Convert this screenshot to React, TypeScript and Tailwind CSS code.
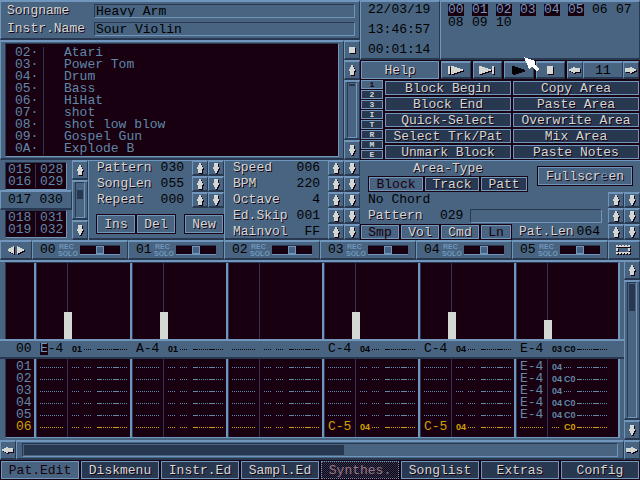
import { ReactNode } from "react";

const raised =
    "border-t-2 border-l border-b-2 border-r border-t-[#7096be] border-l-[#7096be] border-b-[#283850] border-r-[#283850]";
const sunken =
    "border-t border-l border-b border-r border-t-[#283850] border-l-[#283850] border-b-[#7096be] border-r-[#7096be]";
const embossed = "text-[#d4d8d4] [text-shadow:1px_1px_0_#180010]";
// bevel drawn under the children, so steppers can cover it
const ridge = "shadow-[inset_0_1px_0_#7096be,inset_0_-2px_0_#283850]";
const narrow = "font-['Liberation_Sans_Narrow','Liberation_Sans',sans-serif] font-bold";

const samples = [
    { id: "02", name: "Atari" },
    { id: "03", name: "Power Tom" },
    { id: "04", name: "Drum" },
    { id: "05", name: "Bass" },
    { id: "06", name: "HiHat" },
    { id: "07", name: "shot" },
    { id: "08", name: "shot low blow" },
    { id: "09", name: "Gospel Gun" },
    { id: "0A", name: "Explode B" },
];

const slots = ["00", "01", "02", "03", "04", "05", "06", "07", "08", "09", "10"];

const blockActions = [
    ["Block Begin", "Copy Area"],
    ["Block End", "Paste Area"],
    ["Quick-Select", "Overwrite Area"],
    ["Select Trk/Pat", "Mix Area"],
    ["Unmark Block", "Paste Notes"],
];

const songSettings = [
    { label: "Pattern", value: "030" },
    { label: "SongLen", value: "055" },
    { label: "Repeat", value: "000" },
];

const playSettings = [
    { label: "Speed", value: "006" },
    { label: "BPM", value: "220" },
    { label: "Octave", value: "4" },
    { label: "Ed.Skip", value: "001" },
    { label: "Mainvol", value: "FF" },
];

const channels = ["00", "01", "02", "03", "04", "05"];
const levels = [27, 27, 0, 27, 27, 19];

interface Step {
    note?: string;
    ins?: string;
    cmd?: string;
}

const currentRow: Step[] = [
    { note: "E-4", ins: "01" },
    { note: "A-4", ins: "01" },
    {},
    { note: "C-4", ins: "04" },
    { note: "C-4", ins: "04" },
    { note: "E-4", ins: "03", cmd: "C0" },
];

const rows: { id: string; steps: Step[] }[] = [
    { id: "01", steps: [{}, {}, {}, {}, {}, { note: "E-4", ins: "04" }] },
    { id: "02", steps: [{}, {}, {}, {}, {}, { note: "E-4", ins: "04", cmd: "C0" }] },
    { id: "03", steps: [{}, {}, {}, {}, {}, { note: "E-4", ins: "04" }] },
    { id: "04", steps: [{}, {}, {}, {}, {}, { note: "E-4", ins: "04", cmd: "C0" }] },
    { id: "05", steps: [{}, {}, {}, {}, {}, { note: "E-4", ins: "04", cmd: "C0" }] },
    {
        id: "06",
        steps: [{}, {}, {}, { note: "C-5", ins: "04" }, { note: "C-5", ins: "04" }, { cmd: "C0" }],
    },
];

const tabs = ["Pat.Edit", "Diskmenu", "Instr.Ed", "Sampl.Ed", "Synthes.", "Songlist", "Extras", "Config"];

const glyphs = {
    up: { w: 6, h: 10, d: "M2 0h2v2h1v2h1v2h-1v4h-4v-4h-1v-2h1v-2h1z" },
    down: { w: 6, h: 10, d: "M1 0h4v4h1v2h-1v2h-1v2h-2v-2h-1v-2h-1v-2h1z" },
    left: { w: 11, h: 6, d: "M0 2h2v-1h2v-1h2v1h5v4h-5v1h-2v-1h-2v-1h-2z" },
    right: { w: 11, h: 6, d: "M11 2h-2v-1h-2v-1h-2v1h-5v4h5v1h2v-1h2v-1h2z" },
    square: { w: 6, h: 6, d: "M0 0h6v6h-6z" },
    stop: { w: 6, h: 8, d: "M0 0h6v8h-6z" },
    play: { w: 12, h: 8, d: "M0 0h3v1h3v1h3v1h3v2h-3v1h-3v1h-3v1h-3z" },
    playSong: { w: 15, h: 8, d: "M0 0h2v8h-2zM3 0h3v1h3v1h3v1h3v2h-3v1h-3v1h-3v1h-3z" },
    playNext: { w: 15, h: 8, d: "M13 0h2v8h-2zM0 0h3v1h3v1h3v1h3v2h-3v1h-3v1h-3v1h-3z" },
    spread: {
        w: 16,
        h: 8,
        d: "M6 0v8h-1v-1h-2v-1h-2v-1h-1v-2h1v-1h2v-1h2v-1zM9 0h1v1h2v1h2v1h2v2h-2v1h-2v1h-2v1h-1z",
    },
    film: {
        w: 15,
        h: 9,
        d: "M0 0h2v2h-2zM3 0h2v2h-2zM6 0h2v2h-2zM9 0h2v2h-2zM12 0h2v2h-2zM0 7h2v2h-2zM3 7h2v2h-2zM6 7h2v2h-2zM9 7h2v2h-2zM12 7h2v2h-2zM0 3h2v3h-2zM12 3h2v3h-2zM2 1h10v1h-10zM2 7h10v1h-10z",
    },
};

interface GlyphProps {
    name: keyof typeof glyphs;
    dark?: boolean;
}

const Glyph = ({ name, dark }: GlyphProps) => {
    const { w, h, d } = glyphs[name];
    return (
        <svg
            width={w + 1}
            height={h + 1}
            viewBox={`0 0 ${w + 1} ${h + 1}`}
            shapeRendering="crispEdges"
            aria-hidden="true"
        >
            <path d={d} transform="translate(1 1)" fill="#180010" />
            <path d={d} fill={dark ? "#000000" : "#d4d8d4"} />
        </svg>
    );
};

interface IconButtonProps extends GlyphProps {
    label: string;
    className?: string;
}

const IconButton = ({ name, dark, label, className = "" }: IconButtonProps) => (
    <button aria-label={label} className={`flex items-center justify-center shrink-0 ${raised} ${className}`}>
        <Glyph name={name} dark={dark} />
    </button>
);

const Stepper = ({ label }: { label: string }) => (
    <div className="flex shrink-0">
        <IconButton name="up" label={`${label} up`} className="w-4 h-4" />
        <IconButton name="down" label={`${label} down`} className="w-4 h-4" />
    </div>
);

interface PushButtonProps {
    children: ReactNode;
    tone?: "face" | "dark" | "pressed";
    className?: string;
}

// a light outline sitting in a one pixel dark gap
const PushButton = ({ children, tone = "dark", className = "" }: PushButtonProps) => {
    const tones = {
        face: "bg-[#486480] text-[#d4d8d4] [text-shadow:1px_1px_0_#180010]",
        dark: "bg-[#283850] text-[#d4d8d4] [text-shadow:1px_1px_0_#180010]",
        pressed: "bg-[#486480] text-[#180010]",
    };
    return (
        <button
            className={`flex items-center justify-center pt-px whitespace-nowrap leading-3 border border-[#7096be] outline-1 outline-[#180010] ${tones[tone]} ${className}`}
        >
            {children}
        </button>
    );
};

const VerticalScroll = ({ label, children }: { label: string; children: ReactNode }) => (
    <div className="flex flex-col grow w-4 max-w-4 shrink-0">
        <IconButton name="up" label={`${label} up`} className="h-5" />
        <div className={`flex flex-col grow px-[2px] ${raised}`}>
            <div className={`grow p-px ${sunken}`}>{children}</div>
        </div>
        <IconButton name="down" label={`${label} down`} className="h-5" />
    </div>
);

const SettingRow = ({ label, value }: { label: string; value: string }) => (
    <div className="flex items-center h-4 pl-2">
        <span className={`grow ${embossed}`}>{label}</span>
        <span className="mr-2 text-black">{value}</span>
        <Stepper label={label} />
    </div>
);

const Dots = ({ className }: { className: string }) => (
    <span
        className={`block h-px shrink-0 bg-[repeating-linear-gradient(90deg,currentColor_0_1px,transparent_1px_2px)] ${className}`}
    />
);

interface StepCellProps {
    step: Step;
    current?: boolean;
    cursor?: boolean;
    className?: string;
}

const StepCell = ({ step, current, cursor, className = "" }: StepCellProps) => (
    <div
        className={`flex items-center ${current ? "h-4 pl-[6px]" : "pl-[3px] border-l border-[#283850]"} ${className}`}
    >
        <span className="flex items-center w-6 shrink-0 leading-3">
            {!step.note && <Dots className="w-6" />}
            {step.note && cursor && <span className="bg-[#180010] text-[#7096be]">{step.note[0]}</span>}
            {step.note && (cursor ? step.note.slice(1) : step.note)}
        </span>
        <span
            className={`flex items-center ml-[3px] pl-1 w-4 h-6 shrink-0 border-l ${current ? "border-transparent" : "border-[#283850]"}`}
        >
            {step.ins ? <b className={`text-[9px] leading-3 ${narrow}`}>{step.ins}</b> : <Dots className="w-2" />}
        </span>
        <span className="flex items-center ml-px w-2 shrink-0">
            {step.cmd ? <b className={`text-[9px] leading-3 ${narrow}`}>{step.cmd}</b> : <Dots className="w-2" />}
        </span>
        <span className="flex items-center gap-px ml-[5px] shrink-0">
            <span className="block w-[5px] h-px bg-current" />
            <Dots className="w-[9px]" />
            <span className="block w-[6px] h-px bg-current" />
            <Dots className="w-2" />
        </span>
    </div>
);

const NameField = ({ id, label, value }: { id: string; label: string; value: string }) => (
    <div className="flex items-center h-[18px] pl-[6px] pr-1">
        <label htmlFor={id} className={`w-[87px] shrink-0 ${embossed}`}>
            {label}
        </label>
        <input
            id={id}
            defaultValue={value}
            className={`grow min-w-0 h-[14px] pl-px leading-3 text-black bg-[#486480] outline-none ${sunken}`}
        />
    </div>
);

const SampleSection = () => (
    <div className="flex flex-col basis-[360px] min-w-0 grow-9 shrink">
        <div className={`h-10 ${raised}`}>
            <NameField id="songname" label="Songname" value="Heavy Arm" />
            <NameField id="instrname" label="Instr.Name" value="Sour Violin" />
        </div>
        <div className="flex h-[120px]">
            <div className={`flex grow px-1 py-px ${raised}`}>
                <ul className={`grow pt-[3px] leading-3 bg-[#180010] text-[#6088a8] ${sunken}`}>
                    {samples.map((sample) => (
                        <li key={sample.id} className="flex">
                            <span className="w-[38px] pl-[9px] border-r border-[#283850]">{sample.id}·</span>
                            <span className="pl-5">{sample.name}</span>
                        </li>
                    ))}
                </ul>
            </div>
            <div className="flex flex-col w-4">
                <IconButton name="square" label="Sample menu" className="h-5" />
                <VerticalScroll label="Samples">
                    <div className="h-[2px] bg-[#283850]" />
                </VerticalScroll>
            </div>
        </div>
    </div>
);

const TransportSection = () => (
    <div className="flex flex-col basis-[280px] min-w-0 grow-7 shrink">
        <div className="flex h-[60px] text-black">
            <div className={`w-20 shrink-0 pl-[7px] ${raised}`}>
                <div className="h-5">22/03/19</div>
                <div className="h-5">13:46:57</div>
                <div className="h-4">00:01:14</div>
            </div>
            <div className={`flex flex-wrap content-start grow gap-x-2 gap-y-px pl-[7px] pt-[2px] ${raised}`}>
                {slots.map((slot, index) => (
                    <span
                        key={slot}
                        className={`w-4 h-3 leading-3 ${index < 6 ? "bg-[#180010] text-[#7096be]" : ""}`}
                    >
                        {slot}
                    </span>
                ))}
            </div>
        </div>
        <div className="flex h-5 gap-[2px] p-px bg-[#180010]">
            <PushButton tone="face" className="w-[78px]">
                Help
            </PushButton>
            <div className="flex grow gap-[2px] [&>button]:grow [&>button]:basis-0 [&>button]:bg-[#486480]">
                <IconButton name="playSong" label="Play song" />
                <IconButton name="playNext" label="Play from here" />
                <IconButton name="play" label="Play pattern" dark />
                <IconButton name="stop" label="Stop" />
            </div>
            <div className="flex bg-[#486480]">
                <IconButton name="left" label="Previous" className="w-4" />
                <span className={`w-10 text-center leading-4 text-black ${raised}`}>11</span>
                <IconButton name="right" label="Next" className="w-4" />
            </div>
        </div>
        <div className="flex h-20 bg-[#180010]">
            <div className="flex flex-col w-6 pl-px">
                {["1", "2", "3", "I", "T", "R", "M", "E"].map((mode, index) => (
                    <button
                        key={mode}
                        className={`flex items-center justify-center w-[22px] h-[9px] mb-px text-[8px] leading-none font-bold border border-[#7096be] ${index === 0 ? "bg-[#486480] text-[#180010]" : "bg-[#283850] text-[#d4d8d4]"}`}
                    >
                        {mode}
                    </button>
                ))}
            </div>
            <div className="grid grid-cols-2 grid-rows-5 grow gap-[2px] p-px">
                {blockActions.flat().map((action) => (
                    <PushButton key={action}>{action}</PushButton>
                ))}
            </div>
        </div>
    </div>
);

const PositionList = ({ items }: { items: string[][] }) => (
    <div className={`flex flex-col justify-center grow ml-[5px] mr-[5px] bg-[#180010] text-[#6088a8] ${sunken}`}>
        {items.map(([pos, pattern]) => (
            <div key={pos} className="flex h-3 leading-3">
                <span className="w-[30px] pl-[2px] border-r border-[#283850]">{pos}</span>
                <span className="pl-1">{pattern}</span>
            </div>
        ))}
    </div>
);

const SongSection = () => (
    <div className="flex basis-[360px] min-w-0 grow-9 shrink">
        <div className="flex w-[88px] shrink-0">
            <div className="flex flex-col w-[72px] pt-[2px] pb-[2px]">
                <PositionList
                    items={[
                        ["015", "028"],
                        ["016", "029"],
                    ]}
                />
                <div className={`flex items-center h-5 pl-[7px] gap-2 text-black ${raised}`}>
                    <span>017</span>
                    <span>030</span>
                </div>
                <PositionList
                    items={[
                        ["018", "031"],
                        ["019", "032"],
                    ]}
                />
            </div>
            <VerticalScroll label="Position">
                <div className="h-[9px] mt-[6px] bg-[#283850]" />
            </VerticalScroll>
        </div>
        <div className={`w-[136px] shrink-0 border-l border-l-[#7096be] ${ridge}`}>
            {songSettings.map((setting) => (
                <SettingRow key={setting.label} {...setting} />
            ))}
            <div className="flex h-[18px] mt-[7px] pl-2">
                <PushButton tone="face" className="w-[38px] mr-[2px]">
                    Ins
                </PushButton>
                <PushButton tone="face" className="w-[38px]">
                    Del
                </PushButton>
                <PushButton tone="face" className="w-[38px] ml-auto mr-px">
                    New
                </PushButton>
            </div>
        </div>
        <div className={`grow border-l border-l-[#7096be] ${ridge}`}>
            {playSettings.map((setting) => (
                <SettingRow key={setting.label} {...setting} />
            ))}
        </div>
    </div>
);

const AreaSection = () => (
    <div className={`flex flex-col basis-[280px] min-w-0 grow-7 shrink ${ridge}`}>
        <div className="flex h-8 pl-2 pr-2">
            <div className="w-40">
                <div className={`h-[17px] pt-px leading-4 text-center ${embossed}`}>Area-Type</div>
                <div className="flex h-[14px] gap-[2px] pl-px">
                    <PushButton tone="pressed" className="w-[54px]">
                        Block
                    </PushButton>
                    <PushButton className="w-[54px]">Track</PushButton>
                    <PushButton className="w-[46px]">Patt</PushButton>
                </div>
            </div>
            <PushButton tone="face" className="w-[94px] h-[18px] mt-[7px] ml-auto">
                <span>
                    Fullscr<span className="text-[#7096be]">e</span>en
                </span>
            </PushButton>
        </div>
        <div className="flex items-center h-4 pl-2 text-black">
            <span className="grow">No Chord</span>
            <Stepper label="Chord" />
        </div>
        <div className="flex items-center h-4 pl-2">
            <label htmlFor="pattern-name" className={`w-[72px] shrink-0 ${embossed}`}>
                Pattern
            </label>
            <span className="w-[30px] shrink-0 text-black">029</span>
            <input
                id="pattern-name"
                className={`grow min-w-0 h-[14px] mr-[6px] bg-[#486480] text-black outline-none ${sunken}`}
            />
            <Stepper label="Pattern" />
        </div>
        <div className="flex items-center h-4">
            <div className="flex h-[14px] gap-[2px] pl-px">
                <PushButton tone="pressed" className="w-[38px]">
                    Smp
                </PushButton>
                <PushButton tone="face" className="w-[38px]">
                    Vol
                </PushButton>
                <PushButton tone="face" className="w-[38px]">
                    Cmd
                </PushButton>
                <PushButton tone="pressed" className="w-[30px]">
                    Ln
                </PushButton>
            </div>
            <span className={`ml-2 ${embossed}`}>Pat.Len</span>
            <span className="grow text-right mr-2 text-black">064</span>
            <Stepper label="Pattern length" />
        </div>
    </div>
);

const ChannelHeader = () => (
    <div className="flex h-5 shrink-0">
        <IconButton name="spread" label="Scroll channels" className="w-8" />
        {channels.map((channel) => (
            <div key={channel} className={`flex items-center w-24 shrink-0 pl-[7px] ${raised}`}>
                <span className="w-[18px] text-black">{channel}</span>
                <div className={`flex flex-col w-[22px] text-[7px] leading-[7px] text-[#7096be] ${narrow}`}>
                    <button className="text-left pl-px">REC</button>
                    <button className="text-left">SOLO</button>
                </div>
                <input
                    type="range"
                    aria-label={`Panning ${channel}`}
                    className="w-10 h-[10px] appearance-none bg-[#180010] border-y border-t-[#283850] border-b-[#7096be] [&::-webkit-slider-thumb]:appearance-none [&::-webkit-slider-thumb]:w-2 [&::-webkit-slider-thumb]:h-2 [&::-webkit-slider-thumb]:bg-[#486480] [&::-webkit-slider-thumb]:border [&::-webkit-slider-thumb]:border-[#7096be]"
                />
            </div>
        ))}
        <button aria-label="Track view" className={`flex items-center justify-center grow ${raised}`}>
            <Glyph name="film" />
        </button>
    </div>
);

const frame = "ml-[5px] mr-1 border-l border-l-[#283850] border-r-2 border-r-[#7096be] bg-[#180010]";

const rowHeight = (index: number) => {
    if (index === 0) {
        return "h-[14px] pt-[2px]";
    }
    return index === rows.length - 1 ? "h-4 pb-1" : "h-3";
};

const PatternView = () => (
    <div className="flex grow">
        <div className="flex flex-col grow border-t-2 border-t-[#7096be]">
            <div className={`flex grow border-t border-t-[#283850] ${frame}`}>
                <div className="w-7 shrink-0" />
                {levels.map((level, index) => (
                    <div
                        key={index}
                        className="flex w-24 shrink-0 last:w-auto last:grow last:shrink border-l-2 border-l-[#7096be]"
                    >
                        <div className="flex flex-col items-center w-[35px] shrink-0 pl-[27px] border-l border-l-[#283850]">
                            <div className="grow w-px bg-[#283850]" />
                            <div className="w-2 bg-[#d4d8d4]" style={{ height: level }} />
                        </div>
                    </div>
                ))}
            </div>
            <div className="flex h-5 border-y-2 border-t-[#7096be] border-b-[#283850] text-black">
                <span className="w-[34px] pl-4 leading-4 shrink-0">00</span>
                {currentRow.map((step, index) => (
                    <div key={index} className="w-24 shrink-0">
                        <StepCell step={step} current cursor={index === 0} />
                    </div>
                ))}
            </div>
            <div className={`mb-[2px] overflow-hidden border-b border-b-[#7096be] ${frame}`}>
                <table className="w-full table-fixed border-collapse">
                    <colgroup>
                        <col className="w-7" />
                        {channels.slice(1).map((channel) => (
                            <col key={channel} className="w-24" />
                        ))}
                        <col />
                    </colgroup>
                    <tbody>
                        {rows.map((row, rowIndex) => (
                            <tr key={row.id} className={row.id === "06" ? "text-[#d0a000]" : "text-[#6088a8]"}>
                                <th className="p-0 font-normal text-left leading-3">
                                    <div className={`pl-[10px] ${rowHeight(rowIndex)}`}>{row.id}</div>
                                </th>
                                {row.steps.map((step, index) => (
                                    <td key={index} className="p-0">
                                        <div className="border-l-2 border-l-[#7096be]">
                                            <StepCell step={step} className={rowHeight(rowIndex)} />
                                        </div>
                                    </td>
                                ))}
                            </tr>
                        ))}
                    </tbody>
                </table>
            </div>
        </div>
        <VerticalScroll label="Pattern">
            <div className="h-[27px] bg-[#283850]" />
        </VerticalScroll>
    </div>
);

const Cursor = () => (
    <svg
        className="absolute left-[524px] top-[57px] pointer-events-none"
        width="16"
        height="16"
        viewBox="0 0 16 16"
        shapeRendering="crispEdges"
        aria-hidden="true"
    >
        <path d="M0 0L11 4V6L10 7L15 12L13 15L8 10L5 12Z" fill="#ffffff" />
    </svg>
);

const App = () => {
    return (
        <div className="relative flex flex-col w-full min-h-screen overflow-hidden bg-[#486480] font-['Liberation_Mono',monospace] text-[13px] leading-4">
            <div className="flex h-40 shrink-0">
                <SampleSection />
                <TransportSection />
            </div>
            <div className="flex h-20 shrink-0">
                <SongSection />
                <AreaSection />
            </div>
            <ChannelHeader />
            <PatternView />
            <div className="flex h-5 shrink-0">
                <IconButton name="left" label="Scroll left" className="w-4" />
                <div className={`grow px-[5px] py-px ${raised}`}>
                    <div className={`h-[14px] p-px ${sunken}`}>
                        <div className="w-[54%] h-full bg-[#283850]" />
                    </div>
                </div>
                <IconButton name="right" label="Scroll right" className="w-4" />
            </div>
            <nav className="grid grid-cols-8 h-5 shrink-0 gap-[2px] p-px bg-[#180010]">
                {tabs.map((tab, index) =>
                    tab === "Synthes." ? (
                        <button
                            key={tab}
                            disabled
                            className="pt-px leading-3 text-[#987888] border border-dotted border-[#7096be] bg-[repeating-conic-gradient(#180010_0_25%,#283850_0_50%)] bg-[length:2px_2px]"
                        >
                            {tab}
                        </button>
                    ) : (
                        <PushButton key={tab} tone={index === 0 ? "pressed" : "dark"}>
                            {tab}
                        </PushButton>
                    ),
                )}
            </nav>
            <Cursor />
        </div>
    );
};

export default App;
